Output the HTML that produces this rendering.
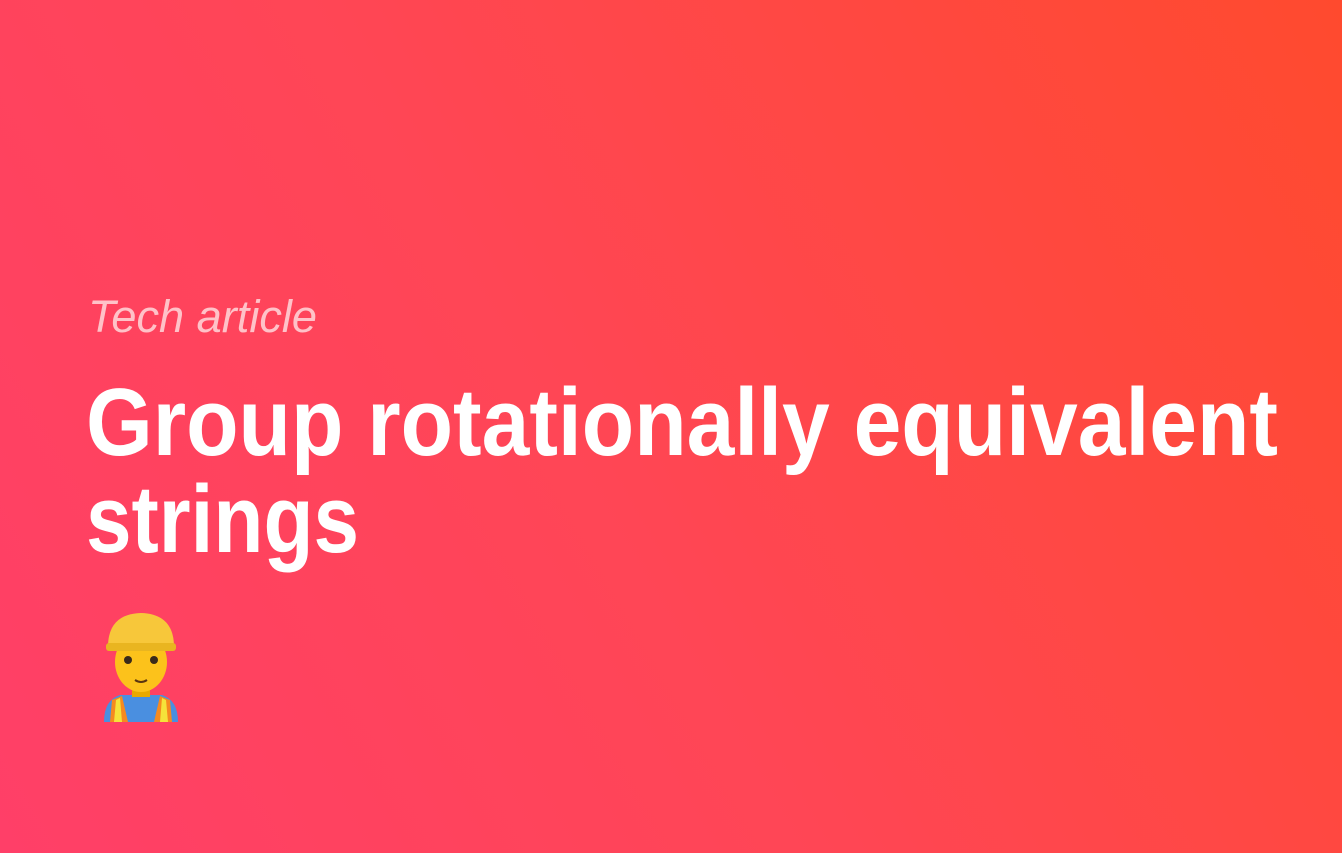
<!DOCTYPE html>
<html><head><style>
html,body{margin:0;padding:0}
body{width:1342px;height:853px;overflow:hidden;background:linear-gradient(60deg,#ff3f68 0%,#ff4655 45%,#ff4a2e 100%);}
svg{position:absolute;left:0;top:0}
</style></head><body>
<svg width="1342" height="853" xmlns="http://www.w3.org/2000/svg">
<text x="88" y="332" font-family="Liberation Sans, sans-serif" font-style="italic" font-size="45" fill="#ffc2c8" textLength="229" lengthAdjust="spacingAndGlyphs">Tech article</text>
<text x="86" y="455" font-family="Liberation Sans, sans-serif" font-weight="bold" font-size="96" fill="#fff" textLength="1192" lengthAdjust="spacingAndGlyphs">Group rotationally equivalent</text>
<text x="86" y="552" font-family="Liberation Sans, sans-serif" font-weight="bold" font-size="96" fill="#fff" textLength="273" lengthAdjust="spacingAndGlyphs">strings</text>
<g>
<!-- body -->
<path d="M104 722 Q104 700 120 695 L162 695 Q178 700 178 722 Z" fill="#4a8fe0"/>
<path d="M110 722 L112 700 L122 696 L128 722 Z" fill="#f68a1f"/>
<path d="M154 722 L160 696 L170 700 L172 722 Z" fill="#f68a1f"/>
<path d="M114 722 L116 700 L120 698 L122 722 Z" fill="#f5e33a"/>
<path d="M160 722 L162 698 L166 700 L168 722 Z" fill="#f5e33a"/>
<!-- neck/face -->
<rect x="132" y="685" width="18" height="12" fill="#e8a900"/>
<ellipse cx="141" cy="662" rx="26" ry="30" fill="#fcc21b"/>
<ellipse cx="128" cy="660" rx="4" ry="4" fill="#3a2a1a"/>
<ellipse cx="154" cy="660" rx="4" ry="4" fill="#3a2a1a"/>
<path d="M135 680 Q141 684 147 680" stroke="#5a3510" stroke-width="2" fill="none"/>
<!-- helmet -->
<path d="M108 647 Q108 614 141 613 Q174 614 174 647 Z" fill="#f7c73a"/>
<rect x="106" y="643" width="70" height="8" rx="3" fill="#e9b520"/>
</g>
</svg>
</body></html>
